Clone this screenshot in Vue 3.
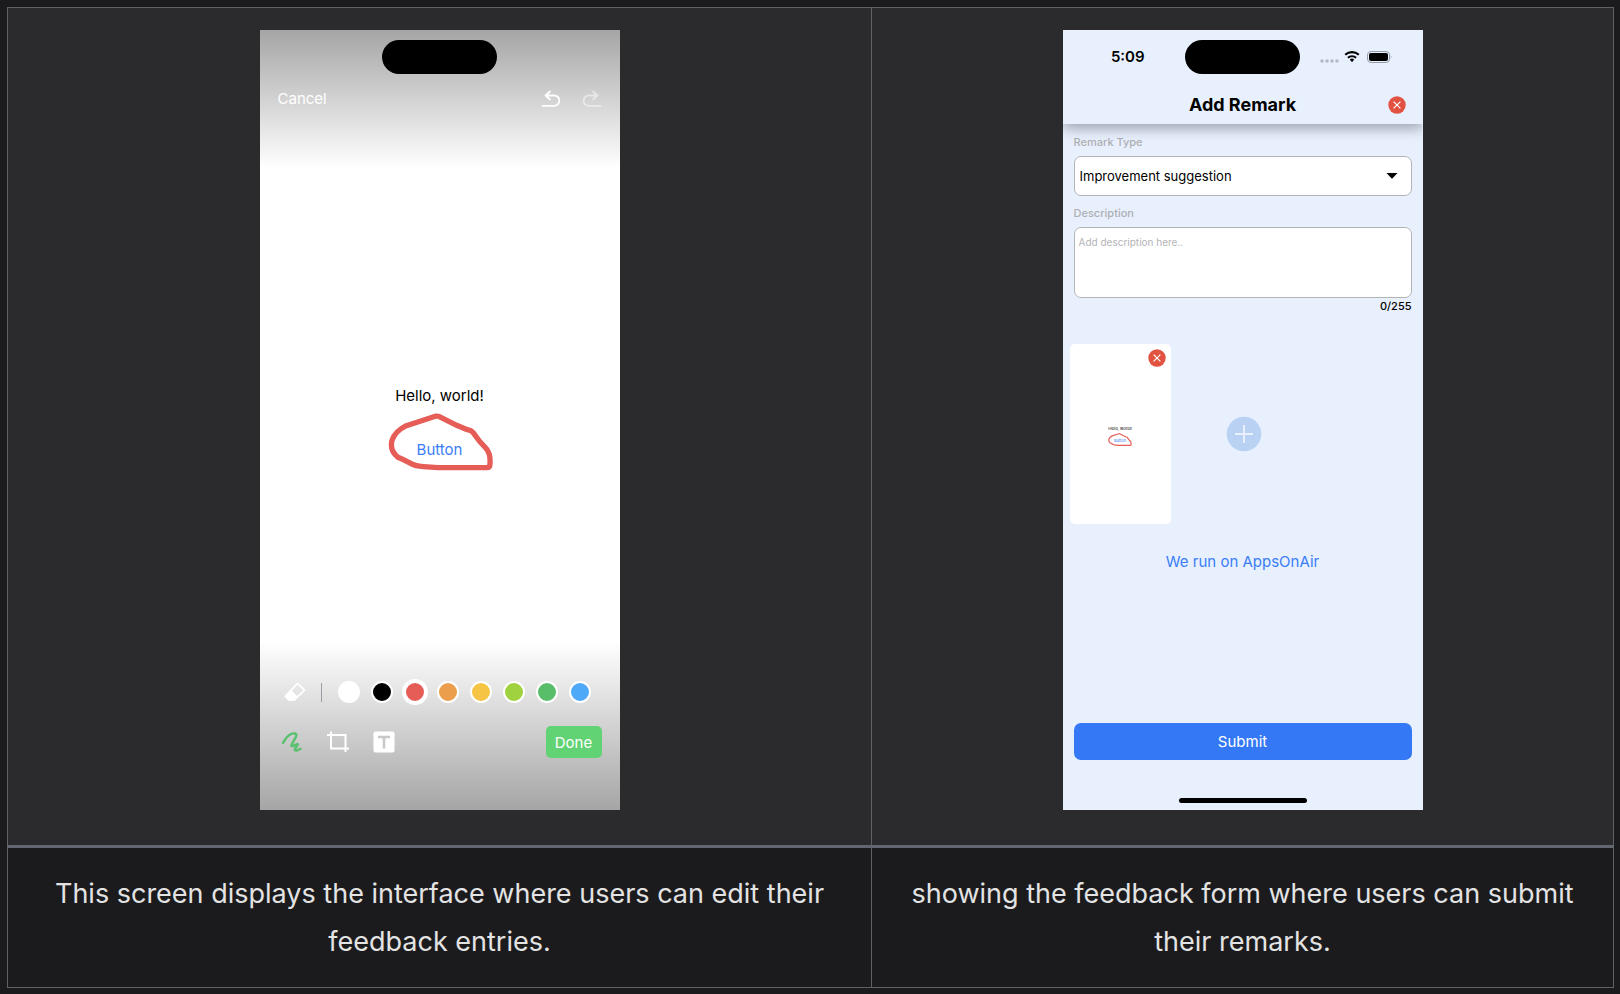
<template>
  <div class="page">
    <table class="screens">
      <thead>
        <tr>
          <th class="editor-col">
            <div class="phone editor">
              <div class="status-bar">
                <span class="island"></span>
              </div>
              <div class="editor-top">
                <button type="button" class="cancel-btn">Cancel</button>
                <div class="history">
                  <button type="button" aria-label="Undo">
                    <svg width="20" height="18" viewBox="0 0 20 18">
                      <path d="M9 1.5 4.5 5.5 9 9.5M5 5.5h8.2a5 5 0 0 1 0 10.3H1.4" />
                    </svg>
                  </button>
                  <button type="button" aria-label="Redo" disabled>
                    <svg width="20" height="18" viewBox="0 0 20 18">
                      <path d="M11 1.5 15.5 5.5 11 9.5M15 5.5H6.8a5 5 0 0 0 0 10.3h11.8" />
                    </svg>
                  </button>
                </div>
              </div>
              <div class="canvas">
                <p class="hello">Hello, world!</p>
                <div class="marked">
                  <button type="button" class="link-btn">Button</button>
                  <svg class="stroke" viewBox="0 0 318 177">
                    <path :d="strokePath" />
                  </svg>
                </div>
              </div>
              <div class="palette">
                <button type="button" class="eraser" aria-label="Eraser">
                  <svg width="22" height="20" viewBox="0 0 22 20">
                    <path d="M13.5 1.5 20.6 8.2 10 18.2H5L1.5 14.2Z" fill="none" stroke="#fff" stroke-width="1.8" stroke-linejoin="round" />
                    <path d="M7 8 14.2 15 10.5 18.8Q10.2 19 9.800 19H5.500Q5 19 4.600 18.600L0.800 14.700Q0.400 14.200 0.900 13.700Z" fill="#fff" />
                  </svg>
                </button>
                <span class="divider"></span>
                <div class="colors">
                  <button
                    v-for="color in colors"
                    :key="color.name"
                    type="button"
                    class="swatch"
                    :class="{ active: color.name === activeColor }"
                    :aria-label="color.name"
                    @click="activeColor = color.name"
                  >
                    <span :style="{ background: color.value }"></span>
                  </button>
                </div>
              </div>
              <div class="tools">
                <div class="tool-list">
                  <button type="button" aria-label="Draw">
                    <svg width="22" height="22" viewBox="0 0 22 22" fill="none" stroke="#58c16e" stroke-width="2.4" stroke-linecap="round" stroke-linejoin="round">
                      <path d="M2 11.8C5 6.5 9.5 1.8 14 2.5 17.5 3.5 13.5 8 10.8 13.2 9.3 16.5 12 15 16 13.2 18.5 12.2 14.5 16.500 13.800 18.300 13.600 20.300 16.500 19.700 19.500 17.800" />
                    </svg>
                  </button>
                  <button type="button" aria-label="Crop">
                    <svg width="22" height="22" viewBox="0 0 22 22" fill="none" stroke="#fff" stroke-width="2">
                      <path d="M4 0.5V17.5H22M0 4H18.5V21" />
                    </svg>
                  </button>
                  <button type="button" aria-label="Text">
                    <svg width="22" height="22" viewBox="0 0 22 22">
                      <rect x="0.5" y="0.5" width="21" height="21" rx="2" fill="#fff" />
                      <path d="M5 6h12M11 6v11.500" stroke="#c8c8c8" stroke-width="2.6" />
                    </svg>
                  </button>
                </div>
                <button type="button" class="done-btn">Done</button>
              </div>
            </div>
          </th>
          <th>
            <form class="phone remark" @submit.prevent>
              <div class="remark-head">
                <div class="status-bar">
                  <span class="time">5:09</span>
                  <span class="island"></span>
                  <svg class="signals" width="74" height="14" viewBox="0 0 74 14">
                    <g fill="#b4bac6">
                      <circle cx="3" cy="11" r="1.8" />
                      <circle cx="8" cy="11" r="1.8" />
                      <circle cx="13" cy="11" r="1.8" />
                      <circle cx="18" cy="11" r="1.8" />
                    </g>
                    <g fill="none" stroke="#000" stroke-width="2.1">
                      <path d="M26.2 4.8a10 10 0 0 1 13.600 0" />
                      <path d="M28.900 7.800a6 6 0 0 1 8.200 0" />
                    </g>
                    <path d="M30.800 9.600a3.200 3.200 0 0 1 4.400 0L33 12.200Z" />
                    <rect x="48.5" y="1.500" width="22" height="11" rx="3.500" fill="none" stroke="#969ba6" />
                    <rect x="50" y="3" width="19" height="8" rx="2" />
                    <path d="M71.800 5.200q1.600 1.800 0 3.600z" fill="#969ba6" />
                  </svg>
                </div>
                <div class="title-row">
                  <h2>Add Remark</h2>
                  <button type="button" class="close-btn" aria-label="Close">
                    <svg width="18" height="18" viewBox="0 0 18 18">
                      <circle cx="9" cy="9" r="8.7" />
                      <path d="M5.600 5.600l6.800 6.800M12.400 5.600l-6.800 6.800" />
                    </svg>
                  </button>
                </div>
              </div>
              <div class="fields">
                <label for="remark-type">Remark Type</label>
                <div class="select-wrap">
                  <select id="remark-type" v-model="remarkType">
                    <option>Improvement suggestion</option>
                  </select>
                  <svg width="12" height="6" viewBox="0 0 12 6">
                    <path d="M0.5 0h11L6.6 5.3q-.6.5-1.2 0Z" />
                  </svg>
                </div>
                <label for="description">Description</label>
                <textarea id="description" v-model="description" maxlength="255" placeholder="Add description here.."></textarea>
                <span class="counter">{{ description.length }}/255</span>
              </div>
              <div class="shots">
                <div class="shot">
                  <button type="button" class="close-btn" aria-label="Remove image">
                    <svg width="18" height="18" viewBox="0 0 18 18">
                      <circle cx="9" cy="9" r="8.7" />
                      <path d="M5.600 5.600l6.800 6.800M12.400 5.600l-6.800 6.800" />
                    </svg>
                  </button>
                  <p class="hello">Hello, world!</p>
                  <div class="marked">
                    <span class="mini-btn">Button</span>
                    <svg class="stroke" viewBox="0 0 318 177">
                      <path :d="strokePath" />
                    </svg>
                  </div>
                </div>
                <div class="add-shot">
                  <button type="button" aria-label="Add image">
                    <svg width="36" height="36" viewBox="0 0 36 36">
                      <circle cx="18" cy="18" r="17.3" fill="#b9d1f3" />
                      <path d="M18 9v18M9 18h18" stroke="#e8f0fe" stroke-width="2" />
                    </svg>
                  </button>
                </div>
              </div>
              <a href="#" class="powered">We run on AppsOnAir</a>
              <button type="submit" class="submit-btn">Submit</button>
              <span class="home-bar"></span>
            </form>
          </th>
        </tr>
      </thead>
      <tbody>
        <tr>
          <td>This screen displays the interface where users can edit their feedback entries.</td>
          <td>showing the feedback form where users can submit their remarks.</td>
        </tr>
      </tbody>
    </table>
  </div>
</template>

<script setup>
import { ref } from 'vue'

const colors = [
  { name: 'White', value: '#ffffff' },
  { name: 'Black', value: '#000000' },
  { name: 'Red', value: '#e65c57' },
  { name: 'Orange', value: '#eb9f4d' },
  { name: 'Yellow', value: '#f6c444' },
  { name: 'Lime', value: '#a0d13f' },
  { name: 'Green', value: '#58be69' },
  { name: 'Blue', value: '#4eaaf8' }
]
const activeColor = ref('Red')

const remarkType = ref('Improvement suggestion')
const description = ref('')

// hand-drawn loop around the button
const strokePath =
  'M142 10 L55 38 Q22 54 12 82 Q4 112 30 133 Q42 138 62 148 Q80 160 106 161 L150 164 L296 164 Q306 164 306 152 Q308 122 294 106 L274 84 L255 58 Q250 52 238 50 L206 37 L154 11 Q148 8 142 10'
</script>

<style>
body {
  background: #1b1b1d;
}
</style>

<style scoped>
.page {
  padding: 7px 6px 0 7px;
  font-family: Inter, 'Liberation Sans', sans-serif;
}
.screens {
  width: 100%;
  border-collapse: collapse;
  background: #1b1b1d;
}
th, td {
  border: 1px solid #606167;
  text-align: center;
}
th {
  padding: 22px 28px 35px;
  background: #2b2b2d;
  border-bottom: 3px solid #606770;
  font-weight: 400;
}
.editor-col {
  width: 53.8%;
}
td {
  padding: 22px 28px 21px;
  color: #e3e3e3;
  font-size: 27px;
  line-height: 48px;
}
button {
  padding: 0;
  border: none;
  background: none;
  font-family: inherit;
  cursor: pointer;
}
svg {
  display: block;
}
p, h2 {
  margin: 0;
}
.phone {
  display: flex;
  flex-direction: column;
  max-width: 360px;
  min-height: 780px;
  margin: 0 auto;
  font-size: 15px;
  line-height: 20px;
}
.status-bar {
  display: grid;
  grid-template-columns: 1fr 115px 1fr;
  align-items: center;
  height: 34px;
  padding-top: 10px;
}
.island {
  grid-column: 2;
  height: 34px;
  border-radius: 17px;
  background: #000;
}

/* editor screen */
.editor {
  background:
    linear-gradient(#a5a5a5, #fff) top / 100% 138px no-repeat,
    linear-gradient(#fff, #a5a5a5) bottom / 100% 168px no-repeat,
    #fff;
}
.editor-top {
  display: flex;
  justify-content: space-between;
  align-items: center;
  padding: 15px 18px 0;
}
.cancel-btn {
  color: #fff;
  font-size: 15px;
  line-height: 20px;
}
.history {
  display: flex;
  gap: 21px;
}
.history svg {
  fill: none;
  stroke: #fff;
  stroke-width: 1.8;
  stroke-linecap: round;
  stroke-linejoin: round;
}
.history button:disabled {
  opacity: 0.5;
}
.canvas {
  flex: 1;
  padding-top: 277px;
}
.hello {
  color: #000;
}
.marked {
  position: relative;
  margin-top: 34px;
}
.link-btn {
  display: block;
  margin: 0 auto;
  color: #3a7df6;
  font-size: 15px;
  line-height: 20px;
}
.stroke {
  position: absolute;
  top: -27px;
  left: 50%;
  width: 106px;
  margin-left: -52px;
  pointer-events: none;
}
.stroke path {
  fill: none;
  stroke: #e65c57;
  stroke-width: 16;
  stroke-linecap: round;
  stroke-linejoin: round;
}
.palette {
  display: flex;
  align-items: center;
  height: 26px;
  padding-left: 24px;
}
.divider {
  width: 1px;
  height: 19px;
  margin: 0 14px 0 15px;
  background: #9d9ca5;
}
.colors {
  display: flex;
  gap: 7px;
}
.swatch {
  display: flex;
  justify-content: center;
  align-items: center;
  width: 26px;
  height: 26px;
  border-radius: 50%;
}
.swatch span {
  width: 18px;
  height: 18px;
  border: 2px solid #fff;
  border-radius: 50%;
}
.swatch.active {
  background: #fff;
}
.tools {
  display: flex;
  justify-content: space-between;
  align-items: center;
  padding: 21px 18px 52px 21px;
}
.tool-list {
  display: flex;
  gap: 24px;
}
.done-btn {
  width: 56px;
  height: 32px;
  border-radius: 5px;
  background: #62d374;
  color: #fff;
  font-size: 15px;
}

/* remark form */
.remark {
  background: #e8f0fe;
}
.remark-head {
  padding-bottom: 7px;
  box-shadow: 0 5px 12px rgba(0, 0, 0, 0.3);
  clip-path: inset(0 0 -20px 0);
}
.time {
  grid-column: 1;
  padding-left: 8px;
  color: #000;
  font-weight: 600;
}
.signals {
  justify-self: center;
  margin-right: 10px;
}
.title-row {
  display: grid;
  grid-template-columns: 1fr auto 1fr;
  align-items: center;
  padding: 19px 17px 0;
}
.title-row h2 {
  grid-column: 2;
  color: #000;
  font-size: 18px;
  font-weight: 700;
  line-height: 24px;
}
.title-row .close-btn {
  justify-self: end;
}
.close-btn circle {
  fill: #e25241;
}
.close-btn path {
  stroke: #fff;
  stroke-width: 1.2;
}
.fields {
  display: flex;
  flex-direction: column;
  padding: 10px 11px 0;
  text-align: left;
}
.fields label {
  color: #aeafb2;
  font-size: 11px;
  font-weight: 500;
  line-height: 16px;
}
.select-wrap {
  position: relative;
  margin: 6px 0 9px;
}
.select-wrap svg {
  position: absolute;
  top: 17px;
  right: 14px;
  pointer-events: none;
}
select, textarea {
  display: block;
  box-sizing: border-box;
  width: 100%;
  border: 1px solid #b3b4b6;
  border-radius: 7px;
  background: #fff;
  color: #000;
  font-family: inherit;
}
select {
  appearance: none;
  height: 40px;
  padding: 0 5px;
  font-size: 13px;
}
textarea {
  height: 71px;
  margin-top: 6px;
  padding: 6px 4px;
  font-size: 10px;
  line-height: 16px;
  resize: none;
}
textarea::placeholder {
  color: #b4b4b6;
}
.counter {
  align-self: flex-end;
  color: #000;
  font-size: 11px;
  font-weight: 500;
  line-height: 16px;
}
.shots {
  display: flex;
  gap: 23px;
  padding: 30px 7px 0;
}
.shot {
  position: relative;
  width: 101px;
  height: 180px;
  border-radius: 5px;
  background: #fff;
  font-size: 4px;
  line-height: 6px;
}
.shot .close-btn {
  position: absolute;
  top: 5px;
  right: 5px;
}
.shot .hello {
  padding-top: 82px;
}
.shot .marked {
  margin-top: 6px;
}
.mini-btn {
  display: block;
  color: #3a7df6;
}
.shot .stroke {
  top: -5px;
  width: 24px;
  margin-left: -12px;
}
.add-shot {
  display: flex;
  justify-content: center;
  align-items: center;
  width: 101px;
}
.powered {
  margin: 28px auto 0;
  color: #3a7df6;
  text-decoration: none;
}
.submit-btn {
  height: 37px;
  margin: auto 11px 38px;
  border-radius: 7px;
  background: #3478f6;
  color: #fff;
  font-size: 15px;
}
.home-bar {
  width: 128px;
  height: 5px;
  margin: 0 auto 7px;
  border-radius: 3px;
  background: #000;
}
</style>
